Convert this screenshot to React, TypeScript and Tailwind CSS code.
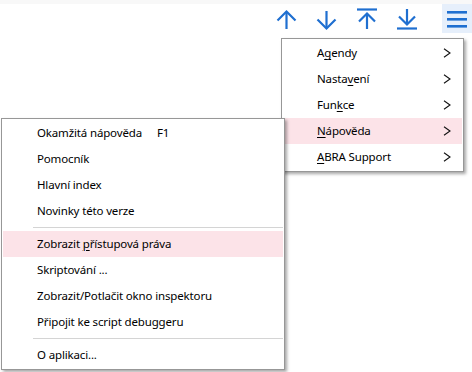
import React from "react";

const BLUE = "#1f6fd0";

function Chevron() {
  return (
    <svg width="8" height="10" viewBox="0 0 8 10" className="block">
      <polyline points="1,0.8 7,5 1,9.2" fill="none" stroke="#111" strokeWidth="1.1" />
    </svg>
  );
}

function U({ c }: { c: string }) {
  return <span className="underline decoration-1 underline-offset-[2px]">{c}</span>;
}

type MainItem = { label: React.ReactNode; active?: boolean };

const mainItems: MainItem[] = [
  { label: <>A<U c="g" />endy</> },
  { label: <>Nasta<U c="v" />ení</> },
  { label: <>Fun<U c="k" />ce</> },
  { label: <><U c="N" />ápověda</>, active: true },
  { label: <><U c="A" />BRA Support</> },
];

type SubItem =
  | { sep: true }
  | { sep?: false; label: React.ReactNode; shortcut?: string; active?: boolean };

const subItems: SubItem[] = [
  { label: "Okamžitá nápověda", shortcut: "F1" },
  { label: "Pomocník" },
  { label: "Hlavní index" },
  { label: "Novinky této verze" },
  { sep: true },
  { label: <>Zobrazit <U c="p" />řístupová práva</>, active: true },
  { label: "Skriptování ..." },
  { label: "Zobrazit/Potlačit okno inspektoru" },
  { label: "Připojit ke script debuggeru" },
  { sep: true },
  { label: "O aplikaci..." },
];

export default function App() {
  return (
    <div
      className="relative w-[472px] h-[372px] overflow-hidden bg-white text-[11.5px] tracking-[-0.15px] text-black"
      style={{ fontFamily: '"Noto Sans", "Open Sans", sans-serif' }}
    >
      <div className="h-[4px] bg-[#f8f8f8]" />
      <div className="flex justify-end h-[29px]">
        <div className="w-10 h-[29px]">
          <svg width="40" height="29" viewBox="0 0 40 29">
            <g fill="none" stroke={BLUE} strokeWidth="2.2">
              <line x1="19.5" y1="8" x2="19.5" y2="25" />
              <polyline points="10.5,16.5 19.5,7.5 28.5,16.5" />
            </g>
          </svg>
        </div>
        <div className="w-10 h-[29px]">
          <svg width="40" height="29" viewBox="0 0 40 29">
            <g fill="none" stroke={BLUE} strokeWidth="2.2">
              <line x1="19.5" y1="7" x2="19.5" y2="24" />
              <polyline points="10.5,15.5 19.5,24.5 28.5,15.5" />
            </g>
          </svg>
        </div>
        <div className="w-10 h-[29px]">
          <svg width="40" height="29" viewBox="0 0 40 29">
            <g fill="none" stroke={BLUE} strokeWidth="2.2">
              <line x1="10" y1="5.5" x2="30" y2="5.5" />
              <line x1="20" y1="10" x2="20" y2="25" />
              <polyline points="12,17.5 20,9.5 28,17.5" />
            </g>
          </svg>
        </div>
        <div className="w-10 h-[29px]">
          <svg width="40" height="29" viewBox="0 0 40 29">
            <g fill="none" stroke={BLUE} strokeWidth="2.2">
              <line x1="10" y1="24.5" x2="30" y2="24.5" />
              <line x1="20" y1="5" x2="20" y2="20" />
              <polyline points="12,12.5 20,20.5 28,12.5" />
            </g>
          </svg>
        </div>
        <div className="w-[15px]" />
        <div className="w-[30px] h-[29px] bg-[#e6effb]">
          <svg width="30" height="29" viewBox="0 0 30 29">
            <g fill={BLUE}>
              <rect x="5" y="7" width="20" height="2.6" />
              <rect x="5" y="14" width="20" height="2.6" />
              <rect x="5" y="21" width="20" height="2.6" />
            </g>
          </svg>
        </div>
      </div>

      {/* Main dropdown menu */}
      <div className="absolute left-[281px] top-[38px] w-[183px] border border-[#979797] bg-white py-[1px] px-[1px] shadow-[2px_2px_3px_rgba(0,0,0,0.35)]">
        {mainItems.map((it, i) => (
          <div
            key={i}
            className={`flex items-center h-[26px] pl-[34px] pr-[11px] ${it.active ? "bg-[#fce3e8]" : ""}`}
          >
            <span className="leading-none">{it.label}</span>
            <span className="ml-auto">
              <Chevron />
            </span>
          </div>
        ))}
      </div>

      {/* Sub menu */}
      <div className="absolute left-[1px] top-[118px] w-[284px] border border-[#979797] bg-white py-[1px] px-[1px] shadow-[2px_2px_3px_rgba(0,0,0,0.35)]">
        {subItems.map((it, i) =>
          it.sep ? (
            <div key={i} className="h-[7px] pl-[30px] pt-[3px]">
              <div className="h-[1px] bg-[#d4d4d4]" />
            </div>
          ) : (
            <div
              key={i}
              className={`flex items-center h-[26px] pl-[34px] ${it.active ? "bg-[#fce3e8]" : ""}`}
            >
              <span className={`leading-none ${it.shortcut ? "w-[120px]" : ""}`}>{it.label}</span>
              {it.shortcut && <span className="leading-none">{it.shortcut}</span>}
            </div>
          )
        )}
      </div>
    </div>
  );
}
